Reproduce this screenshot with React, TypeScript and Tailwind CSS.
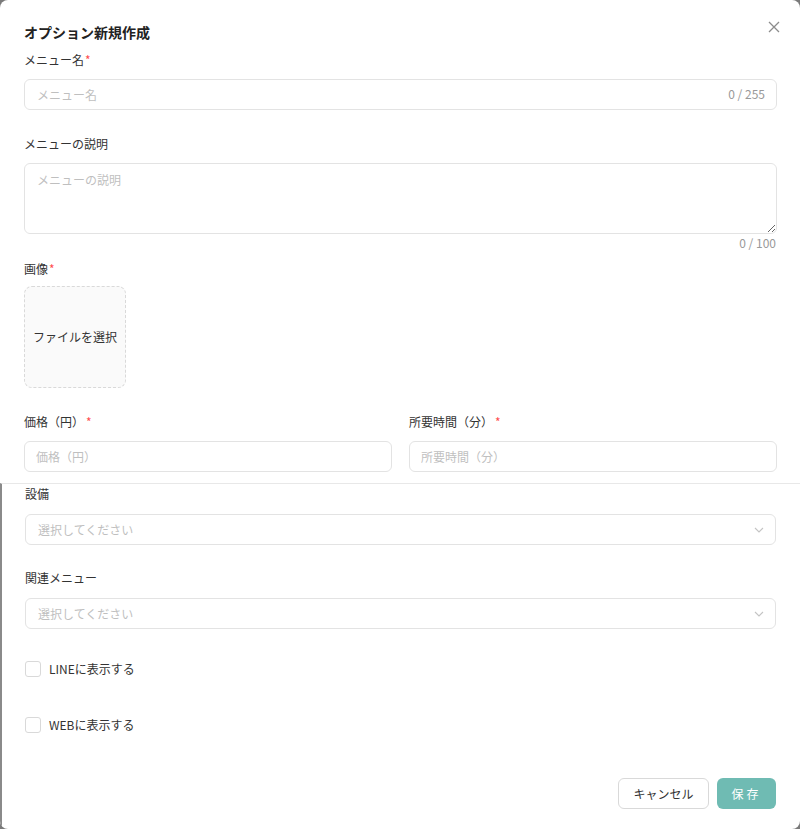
import React from "react";

const font = { fontFamily: '"Noto Sans CJK JP", "Noto Sans", sans-serif' };

function Label({ text, required }: { text: string; required?: boolean }) {
  return (
    <div className="text-[12px] leading-[20px] text-[#333]">
      {text}
      {required && <span className="text-[#ff4d4f] ml-[1px]">*</span>}
    </div>
  );
}

function Select() {
  return (
    <div className="h-[31px] rounded-[6px] border border-[#e3e3e3] bg-white flex items-center justify-between pl-[12px] pr-[10px]">
      <span className="text-[12px] text-[#bfbfbf]">選択してください</span>
      <svg width="12" height="12" viewBox="0 0 12 12" fill="none">
        <path d="M2 4l4 4 4-4" stroke="#c4c4c4" strokeWidth="1.1" />
      </svg>
    </div>
  );
}

function Check({ text }: { text: string }) {
  return (
    <label className="flex items-center gap-[8px]">
      <span className="w-[16px] h-[16px] rounded-[3px] border border-[#d9d9d9] bg-white" />
      <span className="text-[12px] text-[#333]">{text}</span>
    </label>
  );
}

export default function App() {
  return (
    <div className="w-[800px] h-[829px] bg-[#7a7a7a]" style={font}>
      <div className="w-[800px] h-[829px] bg-white rounded-[8px] overflow-hidden flex flex-col">
        <div className="pl-[24px] pr-[23px]">
          <div className="flex items-center justify-between pt-[22px] h-[42px]">
            <div className="text-[14px] leading-[20px] font-bold text-[#222]">オプション新規作成</div>
            <svg width="12" height="12" viewBox="0 0 12 12" className="mr-[-3px] mt-[-10px]">
              <path d="M1 1l10 10M11 1L1 11" stroke="#8c8c8c" strokeWidth="1.3" />
            </svg>
          </div>
          <div className="mt-[8px]">
            <Label text="メニュー名" required />
          </div>
          <div className="mt-[9px] relative">
            <input
              placeholder="メニュー名"
              className="w-full h-[31px] rounded-[6px] border border-[#e3e3e3] pl-[12px] pr-[60px] text-[12px] placeholder:text-[#bfbfbf] outline-none"
            />
            <span className="absolute right-[12px] top-[7px] text-[12px] leading-[16px] text-[#999]">0 / 255</span>
          </div>
          <div className="mt-[24px]">
            <Label text="メニューの説明" />
          </div>
          <div className="mt-[9px]">
            <textarea
              placeholder="メニューの説明"
              className="block w-full h-[71px] rounded-[6px] border border-[#e3e3e3] px-[12px] py-[7px] text-[12px] leading-[18px] placeholder:text-[#bfbfbf] outline-none"
            />
          </div>
          <div className="text-right text-[12px] leading-[16px] text-[#999] mt-[1px] pr-[1px]">0 / 100</div>
          <div className="mt-[8px]">
            <Label text="画像" required />
          </div>
          <div className="mt-[7px] w-[102px] h-[102px] rounded-[8px] border border-dashed border-[#d9d9d9] bg-[#fafafa] flex items-center justify-center">
            <span className="text-[12px] text-[#333]">ファイルを選択</span>
          </div>
          <div className="mt-[24px] grid grid-cols-2 gap-x-[17px]">
            <div>
              <div className="text-[12px] leading-[20px] text-[#333]">
                価格（円）<span className="text-[#ff4d4f] ml-[2px]">*</span>
              </div>
              <input
                placeholder="価格（円）"
                className="mt-[9px] w-full h-[31px] rounded-[6px] border border-[#e3e3e3] pl-[11px] text-[12px] placeholder:text-[#bfbfbf] outline-none"
              />
            </div>
            <div>
              <div className="text-[12px] leading-[20px] text-[#333]">
                所要時間（分）<span className="text-[#ff4d4f] ml-[2px]">*</span>
              </div>
              <input
                placeholder="所要時間（分）"
                className="mt-[9px] w-full h-[31px] rounded-[6px] border border-[#e3e3e3] pl-[11px] text-[12px] placeholder:text-[#bfbfbf] outline-none"
              />
            </div>
          </div>
        </div>
        <div className="mt-[11px] flex-1 border-t border-[#e8e8e8] border-l-[2px] border-l-[#8a8a8a] pl-[23px] pr-[24px]">
          <Label text="設備" />
          <div className="mt-[10px]">
            <Select />
          </div>
          <div className="mt-[23px]">
            <Label text="関連メニュー" />
          </div>
          <div className="mt-[10px]">
            <Select />
          </div>
          <div className="mt-[31px] h-[18px] flex items-center">
            <Check text="LINEに表示する" />
          </div>
          <div className="mt-[38px] h-[18px] flex items-center">
            <Check text="WEBに表示する" />
          </div>
          <div className="mt-[44px] flex justify-end gap-[8px]">
            <button className="h-[31px] w-[91px] rounded-[6px] border border-[#d9d9d9] bg-white text-[12px] text-[#333]">
              キャンセル
            </button>
            <button className="h-[31px] w-[59px] rounded-[6px] bg-[#6fbbb3] text-[12px] text-white tracking-[3px]">
              保存
            </button>
          </div>
        </div>
      </div>
    </div>
  );
}
